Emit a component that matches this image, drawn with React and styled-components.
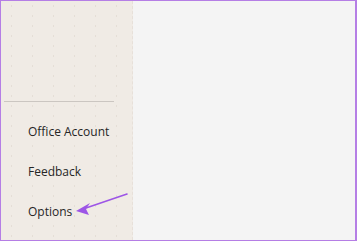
import React from 'react';
import styled, { createGlobalStyle } from 'styled-components';

const Global = createGlobalStyle`
  html, body { margin: 0; padding: 0; }
  body { font-family: "Open Sans", "Noto Sans", sans-serif; }
`;

const Frame = styled.div`
  width: 357px;
  height: 241px;
  box-sizing: border-box;
  border: 1px solid #b57ee5;
  border-right-width: 2px;
  display: flex;
  overflow: hidden;
`;

const Sidebar = styled.nav`
  position: relative;
  width: 131px;
  flex-shrink: 0;
  background-color: #f0ebe5;
  background-image: radial-gradient(circle, #e5ded6 0.6px, transparent 0.9px);
  background-size: 21px 10px;
  border-right: 1px dashed #e7e0d9;
  display: flex;
  flex-direction: column;
  justify-content: flex-end;
  padding-bottom: 9px;
`;

const Divider = styled.hr`
  border: none;
  border-top: 1px solid #cbc6c1;
  margin: 0 18px 9px 3px;
`;

const Item = styled.div`
  height: 40px;
  display: flex;
  align-items: center;
  padding-left: 27px;
  font-size: 12px;
  color: #262626;
`;

const Main = styled.main`
  flex: 1;
  background: #f4f4f4;
`;

const Pointer = styled.svg`
  position: absolute;
  left: 70px;
  top: 188px;
`;

export default function App() {
  return (
    <>
      <Global />
      <Frame>
        <Sidebar>
          <Divider />
          <Item>Office Account</Item>
          <Item>Feedback</Item>
          <Item>Options</Item>
          <Pointer width="60" height="28" viewBox="0 0 60 28">
            <line x1="56" y1="5" x2="12" y2="20" stroke="#9d55e6" strokeWidth="1.6" strokeLinecap="round" />
            <path d="M5 22 L19 14 L15 20 L18 26 Z" fill="#9d55e6" />
          </Pointer>
        </Sidebar>
        <Main />
      </Frame>
    </>
  );
}
